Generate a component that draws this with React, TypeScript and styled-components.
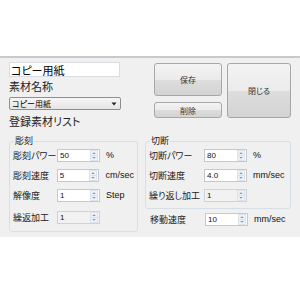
import React, { ReactNode } from 'react'
import styled, { createGlobalStyle } from 'styled-components'

const GlobalStyle = createGlobalStyle`
    body {
        margin: 0;
        background: #ffffff;
        font-family: "Noto Sans CJK JP", "Liberation Sans", sans-serif;
        font-feature-settings: "palt";
    }
`

export default function App() {
    return (
        <>
            <GlobalStyle />
            <Dialog>
                <Top>
                    <MaterialColumn>
                        <NameInput defaultValue="コピー用紙" />
                        <FieldLabel>素材名称</FieldLabel>
                        <Select>
                            <span>コピー用紙</span>
                            <SelectArrow />
                        </Select>
                        <FieldLabel>登録素材リスト</FieldLabel>
                    </MaterialColumn>
                    <ButtonGrid>
                        <Button $area="save">保存</Button>
                        <Button $area="delete">削除</Button>
                        <Button $area="close">閉じる</Button>
                    </ButtonGrid>
                </Top>
                <Bottom>
                    <Group $width={131} $padBottom={7}>
                        <Legend>彫刻</Legend>
                        <ParamRow label="彫刻パワー" labelWidth={44} value="50" unit="%" />
                        <ParamRow label="彫刻速度" labelWidth={44} value="5" unit="cm/sec" />
                        <ParamRow label="解像度" labelWidth={44} value="1" unit="Step" />
                        <ParamRow label="繰返加工" labelWidth={44} value="1" disabled extraGap />
                    </Group>
                    <RightColumn>
                        <Group $width={146} $padBottom={6}>
                            <Legend>切断</Legend>
                            <ParamRow label="切断パワー" labelWidth={55} value="80" unit="%" />
                            <ParamRow label="切断速度" labelWidth={55} value="4.0" unit="mm/sec" />
                            <ParamRow label="繰り返し加工" labelWidth={55} value="1" disabled />
                        </Group>
                        <MoveRow>
                            <ParamRow label="移動速度" labelWidth={55} value="10" unit="mm/sec" />
                        </MoveRow>
                    </RightColumn>
                </Bottom>
            </Dialog>
        </>
    )
}

const Dialog = styled.div`
    background: #f0f0f0;
    border-top: 2px solid #c9c9c9;
    box-sizing: border-box;
    height: 181px;
    margin-top: 56px;
    padding: 4px 9px 0;
`

const Top = styled.div`
    display: flex;
`

const MaterialColumn = styled.div`
    display: flex;
    flex-direction: column;
    width: 112px;
`

const NameInput = styled.input`
    background: #ffffff;
    border: 1px solid #d9dce0;
    box-sizing: border-box;
    color: #000000;
    font-family: inherit;
    font-feature-settings: "palt";
    font-size: 11px;
    height: 15px;
    margin: 0;
    outline: none;
    padding: 0 1px;
    width: 111px;
`

const FieldLabel = styled.div`
    color: #222222;
    font-size: 11px;
    height: 12px;
    line-height: 12px;
    margin-top: 3px;

    & + & {
        margin-top: 2px;
    }
`

const Select = styled.div`
    align-items: center;
    background: linear-gradient(#f6f6f6, #e6e6e6);
    border: 1px solid #8e8f8f;
    border-radius: 2px;
    box-sizing: border-box;
    color: #000000;
    display: flex;
    font-size: 8px;
    height: 13px;
    justify-content: space-between;
    line-height: 11px;
    margin: 5px 0 2px;
    padding: 0 3px 0 2px;
    width: 112px;
`

function SelectArrow() {
    return (
        <svg width="6" height="4" viewBox="0 0 6 4">
            <path d="M0.5 0.5 H5.5 L3 3.5 Z" fill="#222" />
        </svg>
    )
}

const ButtonGrid = styled.div`
    display: grid;
    gap: 6px 5px;
    grid-template-areas: 'save close' 'delete close';
    grid-template-columns: 68px 64px;
    grid-template-rows: 33px 16px;
    margin: 1px 0 0 33px;
`

const Button = styled.button<{ $area: string }>`
    background: linear-gradient(#f3f3f3 0%, #ebebeb 50%, #dddddd 51%, #d3d3d3 100%);
    border: 1px solid #a7a7a7;
    border-radius: 3px;
    color: #333333;
    font-family: inherit;
    font-feature-settings: "palt";
    font-size: 8px;
    grid-area: ${({ $area }) => $area};
    padding: 0;
`

const Bottom = styled.div`
    align-items: flex-start;
    display: flex;
    gap: 7px;
    margin-top: 8px;
`

const Group = styled.fieldset<{ $width: number; $padBottom: number }>`
    border: 1px solid #d5dfe5;
    border-radius: 3px;
    box-sizing: border-box;
    display: flex;
    flex-direction: column;
    gap: 6px;
    margin: 0;
    min-width: 0;
    padding: 1px 3px ${({ $padBottom }) => $padBottom}px;
    width: ${({ $width }) => $width}px;
`

const Legend = styled.legend`
    color: #222222;
    font-size: 9px;
    height: 12px;
    line-height: 12px;
    margin-left: 1px;
    padding: 0 1px;
`

const RightColumn = styled.div`
    display: flex;
    flex-direction: column;
`

const MoveRow = styled.div`
    margin-top: 3px;
    padding-left: 5px;
`

function ParamRow({
    label,
    labelWidth,
    value,
    unit,
    disabled = false,
    extraGap = false,
}: {
    label: string
    labelWidth: number
    value: string
    unit?: ReactNode
    disabled?: boolean
    extraGap?: boolean
}) {
    return (
        <Row $extraGap={extraGap}>
            <RowLabel $width={labelWidth}>{label}</RowLabel>
            <SpinBox $disabled={disabled}>
                <SpinValue>{value}</SpinValue>
                <SpinButtons />
            </SpinBox>
            {unit ? <Unit>{unit}</Unit> : null}
        </Row>
    )
}

const Row = styled.div<{ $extraGap: boolean }>`
    align-items: center;
    display: flex;
    height: 14px;
    margin-top: ${({ $extraGap }) => ($extraGap ? 2 : 0)}px;
`

const RowLabel = styled.div<{ $width: number }>`
    color: #222222;
    font-size: 9px;
    white-space: nowrap;
    width: ${({ $width }) => $width}px;
`

const SpinBox = styled.div<{ $disabled: boolean }>`
    align-items: center;
    background: ${({ $disabled }) => ($disabled ? '#f2f2f2' : '#ffffff')};
    border: 1px solid ${({ $disabled }) => ($disabled ? '#cfd2d6' : '#c5c9ce')};
    box-sizing: border-box;
    display: flex;
    height: 13px;
    justify-content: space-between;
    padding: 0 1px 0 2px;
    width: 43px;
`

const SpinValue = styled.span`
    color: #111111;
    font-family: "Liberation Sans", sans-serif;
    font-size: 8px;
    line-height: 11px;
`

function SpinButtons() {
    return (
        <svg width="8" height="11" viewBox="0 0 8 11">
            <rect x="0.5" y="0.5" width="7" height="10" fill="#eef3f9" stroke="#dbe3ec" />
            <line x1="1" y1="5.5" x2="7" y2="5.5" stroke="#d7e0ea" />
            <path d="M2.2 4 L4 2.2 L5.8 4 Z" fill="#7b98bd" />
            <path d="M2.2 7 L4 8.8 L5.8 7 Z" fill="#7b98bd" />
        </svg>
    )
}

const Unit = styled.div`
    color: #111111;
    font-family: "Liberation Sans", sans-serif;
    font-size: 9px;
    margin-left: 6px;
`
